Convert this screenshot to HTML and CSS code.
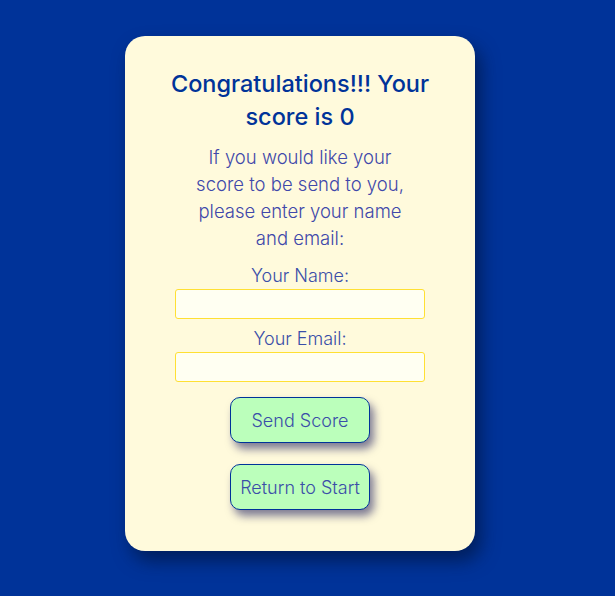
FILE: index.html
```html
<!DOCTYPE html>
<html>
<head>
<meta charset="utf-8">
<link rel="stylesheet" href="styles.css">
</head>
<body>
<div class="card">
  <h2 class="title">Congratulations!!! Your<br>score is 0</h2>
  <p class="intro">If you would like your<br>score to be send to you,<br>please enter your name<br>and email:</p>
  <label class="label" for="name">Your Name:</label>
  <input class="field" id="name" type="text">
  <label class="label" for="email">Your Email:</label>
  <input class="field" id="email" type="email">
  <button class="btn btn-first">Send Score</button>
  <button class="btn">Return to Start</button>
</div>
</body>
</html>
```
FILE: styles.css
```css
html, body {
  margin: 0;
  height: 100%;
}
body {
  background: #003399;
  display: flex;
  justify-content: center;
  align-items: flex-start;
  padding: 36px 15px 0 0;
  box-sizing: border-box;
  font-family: "Inter", "DejaVu Sans", sans-serif;
}
.card {
  width: 350px;
  box-sizing: border-box;
  background: #fffadc;
  border-radius: 20px;
  padding: 31px 50px 41px;
  display: flex;
  flex-direction: column;
  align-items: center;
  box-shadow: 6px 10px 18px rgba(0, 20, 60, 0.65);
}
.title {
  margin: 0 -10px;
  font-size: 23.5px;
  line-height: 33px;
  font-weight: 500;
  color: #003399;
  text-align: center;
  white-space: nowrap;
}
.intro {
  margin: 11px 0 4px;
  font-size: 18.5px;
  line-height: 27px;
  font-weight: 300;
  color: #4048aa;
  text-align: center;
  white-space: nowrap;
}
.label {
  margin-top: 8px;
  font-size: 18px;
  line-height: 24px;
  font-weight: 300;
  color: #3a4ea8;
}
.field {
  width: 250px;
  height: 30px;
  box-sizing: border-box;
  margin: 1px 0 0;
  border: 1px solid #ffe033;
  border-radius: 3px;
  background: #fffff2;
}
.btn {
  width: 140px;
  height: 46px;
  margin-top: 21px;
  box-sizing: border-box;
  border: 1px solid #003399;
  border-radius: 10px;
  background: #bbffbb;
  color: #3a4ea8;
  font-family: "Inter", "DejaVu Sans", sans-serif;
  font-size: 18px;
  font-weight: 300;
  padding: 0;
  white-space: nowrap;
  box-shadow: 4px 6px 8px rgba(20, 20, 90, 0.55);
}
.btn-first {
  margin-top: 15px;
}
```
